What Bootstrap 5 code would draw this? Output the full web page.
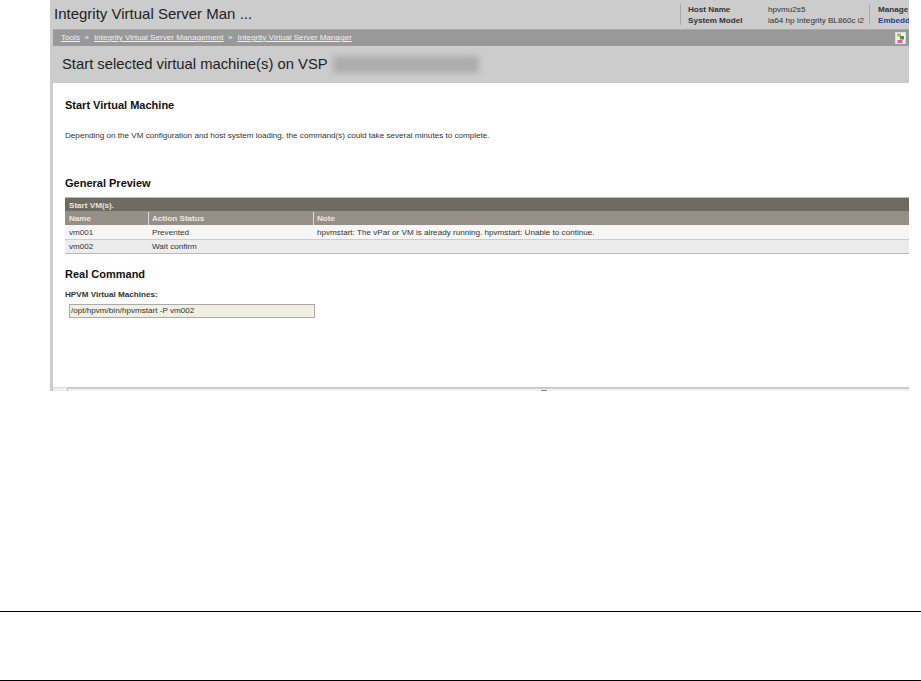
<!DOCTYPE html>
<html lang="en">
<head>
<meta charset="utf-8">
<title>Integrity Virtual Server Manager</title>
<link href="https://cdn.jsdelivr.net/npm/bootstrap@5.3.0/dist/css/bootstrap.min.css" rel="stylesheet">
<style>
html,body{background:#fff;height:681px;overflow:hidden}
body{font-family:"Liberation Sans",Arial,sans-serif;font-size:8.12px;color:#222;line-height:1}
.shot{margin-left:50px;width:859px;height:391px;background:#ccc;overflow:hidden;display:flex;flex-direction:column}
.head{height:29px;padding-left:4px;flex:none}
.head h1{font-size:15px;font-weight:400;margin:0;color:#222;line-height:28px}
.info{height:21px;margin-top:4px;border-left:1px solid #aaa;padding-left:7px;flex:none}
.info-host{width:189px}
.info-mgmt{width:40px;padding-left:8px}
.lbl{font-weight:700;line-height:11px;color:#333;width:80px}
.val{line-height:11px;width:101px;color:#333}
.link-blue{color:#1f3d9c;font-weight:700;width:auto}
.info-mgmt .lbl{width:auto}
.crumbs{height:17px;margin-left:3px;background:#999;color:#eee;padding:0 3px 0 8px;flex:none;border-top:1px solid #aaa}
.crumbs a{color:#f0f0f0;margin-right:4.5px}
.crumbs span{margin-right:5px;font-size:8px}
.titlebar{height:37px;margin-left:3px;padding-left:9px;flex:none;font-size:14.8px;color:#222;gap:5px}
.blurred{width:146px;height:17px;background:#adadad;filter:blur(3px)}
.main{flex:1;min-height:0;background:#fff;margin-left:3px;padding:0 0 0 12px;display:flex;flex-direction:column}
.main h2{font-size:11px;font-weight:700;color:#111;margin:0;line-height:13px}
.main h2.sec1{margin-top:16px}
.desc{margin-top:19px;color:#333;line-height:10px}
.main h2.sec2{margin-top:36px}
.grid{margin-top:7px;border-bottom:1px solid #bbb;border-top:1px solid #bbb;color:#333}
.grid .cap{background:#6f6a62;color:#e8e4df;font-weight:700;height:13px;padding:1px 0 0 4px;line-height:13px}
.grid .colhead{background:#968f87;color:#ece8e2;font-weight:700;height:14px;padding-top:1px;line-height:14px}
.grid .r1{background:#f6f6f6;height:15px;padding-top:2px;line-height:12px;border-bottom:1px solid #ccc}
.grid .r2{background:#ececec;height:13px;padding-top:1px;line-height:12px}
.c1,.c2{flex:none;padding-left:4px}
.c1{width:83px}
.c2{width:165px;border-left:1px solid #ddd;padding-left:3px}
.c3{padding-left:3px;border-left:1px solid #ddd;flex:1}
.r1 .c1,.r1 .c2,.r1 .c3,.r2 .c1,.r2 .c2,.r2 .c3{border-left-color:transparent}
.main h2.sec3{margin-top:14px}
.sub{margin-top:9px;font-weight:700;color:#333;line-height:10px}
.cmd{margin:4px 0 0 4px;width:246px;height:14px;background:#f0f0e2;border:1px solid #aaa;padding-left:1px;line-height:12px;color:#333}
.hscroll{height:4px;margin-left:-12px;margin-top:auto;flex:none;display:flex}
.hs-left{width:14px;background:#eee;border-top:1px solid #ddd;flex:none}
.hs-track{flex:1;background:#f2f2f2;border-top:2px solid #ccc;border-left:1px solid #bbb}
.hs-grip{width:6px;height:1px;margin:1px 0 0 473px;background:#888}
.rule{height:1px;background:#000;width:100%}
.rule.one{margin-top:220px}
.rule.two{margin-top:68px}
</style>
</head>
<body>
<div class="shot">
  <div class="head d-flex">
    <h1 class="flex-grow-1">Integrity Virtual Server Man ...</h1>
    <div class="info info-host d-flex flex-wrap">
      <div class="lbl">Host Name</div><div class="val">hpvmu2s5</div>
      <div class="lbl">System Model</div><div class="val">ia64 hp Integrity BL860c i2</div>
    </div>
    <div class="info info-mgmt">
      <div class="lbl">Manage</div><div class="val link-blue">Embedd</div>
    </div>
  </div>
  <div class="crumbs d-flex align-items-center">
    <a href="#">Tools</a><span>»</span><a href="#">Integrity Virtual Server Management</a><span>»</span><a href="#">Integrity Virtual Server Manager</a>
    <svg class="ms-auto" width="11" height="12" viewBox="0 0 11 12" aria-hidden="true"><rect width="11" height="12" fill="#eef2f8" stroke="#bcd" /><rect x="2" y="1.500" width="4" height="3" fill="#d9a928"/><rect x="5" y="4" width="4" height="3.500" fill="#3f9a45"/><rect x="2.500" y="8" width="5" height="3" fill="#d9609a"/></svg>
  </div>
  <div class="titlebar d-flex align-items-center">Start selected virtual machine(s) on VSP <div class="blurred"></div></div>
  <div class="main">
    <h2 class="sec1">Start Virtual Machine</h2>
    <p class="desc mb-0">Depending on the VM configuration and host system loading, the command(s) could take several minutes to complete.</p>
    <h2 class="sec2">General Preview</h2>
    <div class="grid">
      <div class="cap">Start VM(s).</div>
      <div class="colhead d-flex"><div class="c1">Name</div><div class="c2">Action Status</div><div class="c3">Note</div></div>
      <div class="r1 d-flex"><div class="c1">vm001</div><div class="c2">Prevented</div><div class="c3">hpvmstart: The vPar or VM is already running. hpvmstart: Unable to continue.</div></div>
      <div class="r2 d-flex"><div class="c1">vm002</div><div class="c2">Wait confirm</div><div class="c3"></div></div>
    </div>
    <h2 class="sec3">Real Command</h2>
    <div class="sub">HPVM Virtual Machines:</div>
    <div class="cmd">/opt/hpvm/bin/hpvmstart -P vm002</div>
    <div class="hscroll"><div class="hs-left"></div><div class="hs-track"><div class="hs-grip"></div></div></div>
  </div>
</div>
<div class="rule one"></div>
<div class="rule two"></div>
</body>
</html>
